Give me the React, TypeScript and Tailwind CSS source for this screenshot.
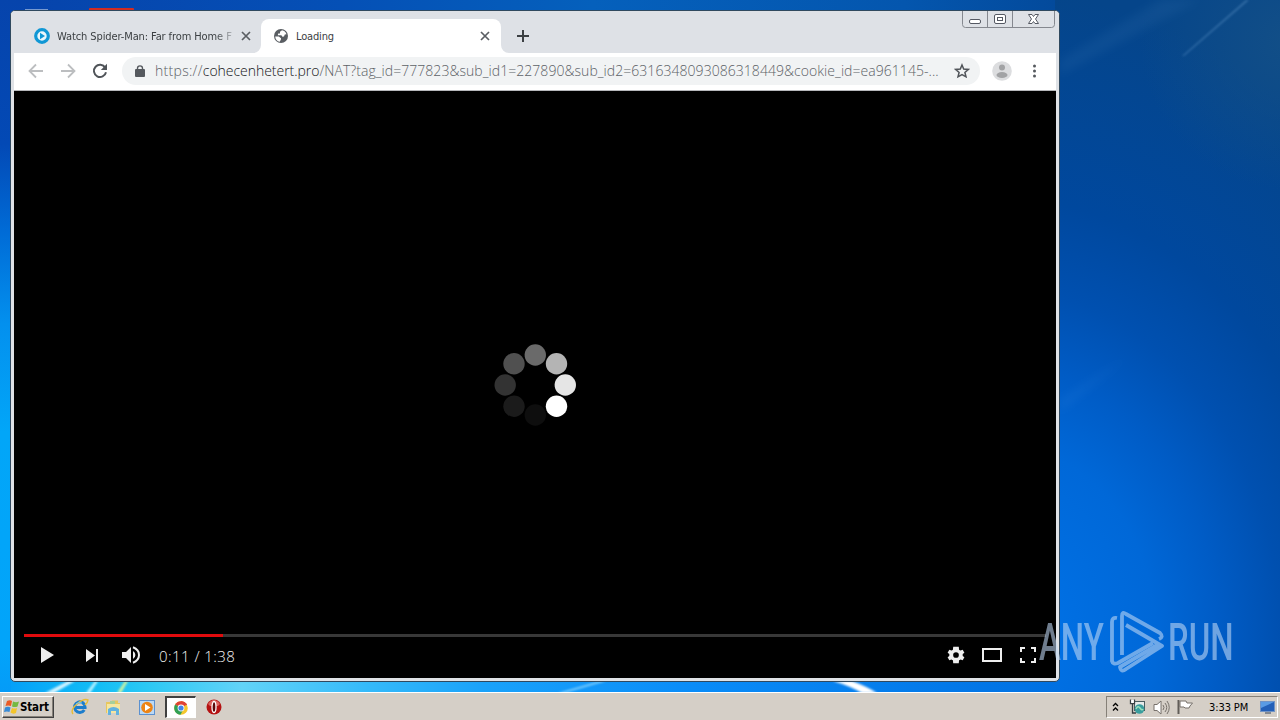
import React from "react";

const ui = "font-['DejaVu_Sans_Condensed','DejaVu_Sans',sans-serif] [font-stretch:condensed]";

function Wallpaper() {
  return (
    <svg className="absolute inset-0" width="1280" height="720" viewBox="0 0 1280 720">
      <defs>
        <linearGradient id="left" x1="0" y1="0" x2="0" y2="1">
          <stop offset="0" stopColor="#0644ac" />
          <stop offset="0.2" stopColor="#0349b5" />
          <stop offset="0.32" stopColor="#006bd6" />
          <stop offset="0.45" stopColor="#0390ee" />
          <stop offset="0.6" stopColor="#02a6f8" />
          <stop offset="0.9" stopColor="#02a4fa" />
          <stop offset="1" stopColor="#0696f6" />
        </linearGradient>
        <linearGradient id="top" x1="0" y1="0" x2="1" y2="0">
          <stop offset="0" stopColor="#0644ac" />
          <stop offset="0.25" stopColor="#0550b6" />
          <stop offset="0.45" stopColor="#0560bc" />
          <stop offset="0.7" stopColor="#0456ae" />
          <stop offset="0.83" stopColor="#03499a" />
          <stop offset="1" stopColor="#0c4784" />
        </linearGradient>
        <radialGradient id="right" gradientUnits="userSpaceOnUse" cx="0" cy="0" r="520" gradientTransform="translate(1000 640) scale(1 1.25)">
          <stop offset="0.1" stopColor="#0070e4" />
          <stop offset="0.3" stopColor="#0068d8" />
          <stop offset="0.42" stopColor="#005cc6" />
          <stop offset="0.54" stopColor="#0050b0" />
          <stop offset="0.68" stopColor="#00489e" />
          <stop offset="1" stopColor="#05458a" />
        </radialGradient>
        <linearGradient id="bottom" x1="0" y1="0" x2="1" y2="0">
          <stop offset="0" stopColor="#05a0f8" />
          <stop offset="0.08" stopColor="#12bdf5" />
          <stop offset="0.13" stopColor="#2cc8f4" />
          <stop offset="0.22" stopColor="#62d3f8" />
          <stop offset="0.34" stopColor="#35bafa" />
          <stop offset="0.45" stopColor="#1aa2fa" />
          <stop offset="0.65" stopColor="#0a8cf8" />
          <stop offset="1" stopColor="#0070e2" />
        </linearGradient>
        <radialGradient id="corner" gradientUnits="userSpaceOnUse" cx="1290" cy="40" r="150">
          <stop offset="0" stopColor="#1b5585" stopOpacity="0.6" />
          <stop offset="1" stopColor="#1b5585" stopOpacity="0" />
        </radialGradient>
        <filter id="soft"><feGaussianBlur stdDeviation="0.8" /></filter>
        <filter id="haze"><feGaussianBlur stdDeviation="5" /></filter>
      </defs>
      <rect width="1280" height="720" fill="url(#left)" />
      <rect x="30" width="1250" height="20" fill="url(#top)" />
      <rect x="1055" y="0" width="225" height="720" fill="url(#right)" />
      <rect x="1055" width="225" height="220" fill="url(#corner)" />
      <rect x="11" y="676" width="1049" height="20" fill="url(#bottom)" />
      <path d="M1060 60L1160 0H1200L1060 75Z" fill="#4b86bd" opacity=".12" filter="url(#haze)" />
      <path d="M1182 56L1246 0H1249L1184 56Z" fill="#6b9fd0" opacity=".4" filter="url(#soft)" />
      <path d="M1060 400L1130 355L1060 412Z" fill="#5da6f0" opacity=".1" filter="url(#haze)" />
      <g filter="url(#soft)">
        <path d="M45 693L68 681H75L54 693Z" fill="#d8f5ff" />
        <path d="M86 693L95 681H98L90 693Z" fill="#c0f3ff" />
        <path d="M117 693L125 681H128L121 693Z" fill="#d2f3a0" />
        <path d="M558 693L600 681H606L564 693Z" fill="#a8e4ff" opacity=".8" />
        <path d="M833 681H852Q868 687 877 693H862Q850 686 833 681Z" fill="#fff" />
      </g>
      <rect x="89" y="8" width="45" height="4" rx="1" fill="#d22c22" />
      <rect x="25" y="9" width="23" height="2" fill="#c5d3e8" opacity=".6" />
    </svg>
  );
}

function Close() {
  return (
    <svg width="10" height="10" viewBox="0 0 10 10" className="shrink-0">
      <path d="M1 1L9 9M9 1L1 9" stroke="#5a5e63" strokeWidth="1.7" fill="none" />
    </svg>
  );
}

function TabStrip() {
  return (
    <div className="flex h-[42px] w-full items-end bg-[#dee1e6]">
      <div className="flex h-[34px] w-[250px] items-center pl-[23px]">
        <svg width="16" height="16" viewBox="0 0 16 16" className="shrink-0">
          <circle cx="8" cy="8" r="6.3" fill="#eaf6fc" stroke="#1097d5" strokeWidth="3.2" />
          <path d="M6 4.8L11 8L6 11.2Z" fill="#1097d5" />
        </svg>
        <div className={`mt-[2px] ml-[7px] w-[176px] shrink-0 overflow-hidden text-[11px] leading-4 tracking-[-0.1px] whitespace-nowrap text-[#3c4043] [mask-image:linear-gradient(to_right,black_90%,transparent_103%)] ${ui}`}>Watch Spider-Man: Far from Home F</div>
        <div className="ml-[8px] flex"><Close /></div>
      </div>
      <div className="relative flex h-[34px] w-[240px] items-center rounded-t-lg bg-white pl-[12px]">
        <svg className="absolute bottom-0 -left-[8px]" width="8" height="8"><path d="M8 0V8H0A8 8 0 0 0 8 0Z" fill="#fff" /></svg>
        <svg className="absolute -right-[8px] bottom-0" width="8" height="8"><path d="M0 0V8H8A8 8 0 0 1 0 0Z" fill="#fff" /></svg>
        <svg width="16" height="16" viewBox="0 0 16 16" className="shrink-0">
          <circle cx="8" cy="8" r="7" fill="#595d62" />
          <path d="M9 2.2L7 3.7V5.4H5.2L4.8 7.2H8.4L9.4 8.8L11 8.6L11.8 6.5L13.5 6.2A6 6 0 0 0 9 2.2ZM2.2 8.4L5.8 8.6L8 10.2V11.3L6.8 13.8A6 6 0 0 1 2.2 8.4Z" fill="#fff" />
        </svg>
        <div className={`mt-[2px] ml-[7px] w-[184px] shrink-0 text-[11px] leading-4 tracking-[-0.16px] text-[#3c4043] ${ui}`}>Loading</div>
        <Close />
      </div>
      <svg className="mb-[11px] ml-[16px]" width="12" height="12"><path d="M6 0V12M0 6H12" stroke="#3c4043" strokeWidth="2" /></svg>
      <svg className="ml-auto self-start" width="97" height="18" viewBox="0 0 97 18">
        <path d="M.5 0V13.5Q.5 16.5 3.5 16.5H89.500Q92.500 16.500 92.500 13.500V0M25.500 0V16.500M50.500 0V16.500" fill="none" stroke="#85888f" />
        <rect x="7.500" y="8.500" width="11" height="4" rx="1.500" fill="#fff" stroke="#555963" />
        <rect x="32.500" y="3.500" width="11" height="9" rx="1.500" fill="#fff" stroke="#555963" />
        <rect x="35.500" y="6.500" width="5" height="3" fill="#fff" stroke="#555963" />
        <path d="M66.500 3.500H70L71.500 5.500L73 3.500H76.500L73.500 8L76.500 12.500H73L71.500 10.500L70 12.500H66.500L69.500 8Z" fill="#fff" stroke="#555963" />
      </svg>
    </div>
  );
}

function Toolbar() {
  return (
    <div className="flex h-[38px] items-center border-b border-[#b6b8bb] bg-white pb-px pl-[14px]">
      <svg width="16" height="16" viewBox="0 0 16 16"><path d="M15 8H2M8 1.500L1.500 8L8 14.500" fill="none" stroke="#bcbec0" strokeWidth="1.800" /></svg>
      <svg className="ml-[16px]" width="16" height="16" viewBox="0 0 16 16"><path d="M1 8H14M8 1.500L14.500 8L8 14.500" fill="none" stroke="#bcbec0" strokeWidth="1.800" /></svg>
      <svg className="ml-[16px]" width="16" height="16" viewBox="0 0 16 16"><path d="M13.200 4.600A6.100 6.100 0 1 0 14 9.200" fill="none" stroke="#505459" strokeWidth="2" /><path d="M15 .8V7H8.800Z" fill="#505459" /></svg>
      <div className="ml-[14px] flex h-[28px] w-[858px] items-center rounded-full bg-[#f1f3f4] pl-[13px]">
        <svg width="10" height="12" viewBox="0 0 10 12" className="mb-px shrink-0"><rect y="4" width="10" height="8" rx="1" fill="#55595e" /><path d="M2.500 4.500V3.200A2.500 2.300 0 0 1 7.500 3.200V4.500" fill="none" stroke="#55595e" strokeWidth="1.400" /></svg>
        <div className="ml-[10px] w-[787px] shrink-0 font-['Open_Sans','Noto_Sans',sans-serif] text-[14px] leading-5 font-light tracking-[0.05px] whitespace-nowrap text-[#5d6267]"><span className="tracking-[0.3px]">https://</span><span className="tracking-[-0.03px] text-[#141518]">cohecenhetert.pro</span>/NAT?tag_id=777823&amp;sub_id1=227890&amp;sub_id2=6316348093086318449&amp;cookie_id=ea961145-...</div>
        <svg width="16" height="16" viewBox="0 0 16 16" className="ml-[12px] shrink-0"><path d="M8 2L9.700 6L14.300 6.400L10.900 9.400L12 13.800L8 11.500L4 13.800L5.100 9.400L1.700 6.400L6.300 6Z" fill="none" stroke="#505459" strokeWidth="1.500" /></svg>
      </div>
      <svg className="ml-[12px]" width="20" height="20" viewBox="0 0 20 20"><circle cx="10" cy="10" r="9.800" fill="#dcdddf" /><circle cx="10" cy="6.500" r="3" fill="#a2a3a5" /><ellipse cx="10" cy="14" rx="5.500" ry="3" fill="#a2a3a5" /></svg>
      <svg className="ml-[20px]" width="5" height="14" viewBox="0 0 5 14"><circle cx="2.500" cy="2" r="1.500" fill="#55595e" /><circle cx="2.500" cy="7" r="1.500" fill="#55595e" /><circle cx="2.500" cy="12" r="1.500" fill="#55595e" /></svg>
    </div>
  );
}

function Player() {
  return (
    <div className="flex h-[587px] flex-col bg-black">
      <div className="flex h-[543px] items-center justify-center pt-[44px]">
        <svg width="84" height="84" viewBox="0 0 84 84">
          <circle cx="42.300" cy="12" r="10.700" fill="#6a6a6a" />
          <circle cx="63.500" cy="20.800" r="10.700" fill="#b4b4b4" />
          <circle cx="72.300" cy="42" r="10.700" fill="#e5e5e5" />
          <circle cx="63.500" cy="63.200" r="10.700" fill="#fff" />
          <circle cx="42.300" cy="72" r="10.700" fill="#0e0e0e" />
          <circle cx="21" cy="63.200" r="10.700" fill="#1b1b1b" />
          <circle cx="12.200" cy="42" r="10.700" fill="#333" />
          <circle cx="21" cy="20.800" r="10.700" fill="#505050" />
        </svg>
      </div>
      <div className="mx-[10px] h-[3px] bg-[#383838]"><div className="h-full w-[199px] bg-[#e00b0d]" /></div>
      <div className="flex h-[36px] items-center pl-[27px]">
        <svg width="14" height="18" viewBox="0 0 14 18"><path d="M0 1L13 9L0 17Z" fill="#eee" /></svg>
        <svg className="ml-[31px]" width="13" height="13" viewBox="0 0 13 13"><path d="M0 0L9 6.500L0 13ZM10 0H12V13H10Z" fill="#eee" /></svg>
        <svg className="ml-[22px]" width="20" height="20" viewBox="0 0 20 20"><path d="M1 7H5L10 2V18L5 13H1ZM12 6Q14.400 7.500 14.400 10T12 14Z" fill="#eee" /><path d="M12 2.300Q18 4.500 18 10T12 17.700" fill="none" stroke="#eee" strokeWidth="2" /></svg>
        <div className="mt-[2px] ml-[18px] w-[100px] font-['Open_Sans',sans-serif] text-[15px] leading-5 font-light tracking-[0.45px] whitespace-nowrap text-[#f5f5f5]">0:11 / 1:38</div>
        <svg className="ml-[688px]" width="18" height="18" viewBox="0 0 24 24"><path fill="#eee" d="M20.900 13.200c.1-.8.1-1.600 0-2.400l2.300-1.800-2.300-4-2.800 1.100c-.6-.5-1.300-.9-2-1.200L15.700 1H8.300l-.4 3.900c-.7.300-1.400.7-2 1.200L3.100 5 .8 9l2.300 1.800c-.1.800-.1 1.600 0 2.400L.8 15l2.300 4 2.800-1.100c.6.500 1.300.9 2 1.200l.4 3.900h7.400l.4-3.900c.7-.3 1.400-.7 2-1.200l2.800 1.100 2.300-4zM12 15.800a3.800 3.800 0 1 1 0-7.600 3.800 3.800 0 0 1 0 7.600z" /></svg>
        <svg className="ml-[17px]" width="20" height="14"><rect x="1" y="1" width="18" height="12" fill="none" stroke="#eee" strokeWidth="2" /></svg>
        <svg className="ml-[18px]" width="16" height="16"><path d="M1 5V1H5M11 1H15V5M15 11V15H11M5 15H1V11" fill="none" stroke="#eee" strokeWidth="2" /></svg>
      </div>
    </div>
  );
}

function Watermark() {
  return (
    <svg className="absolute top-[594px] left-[1024px] overflow-visible" width="224" height="92" viewBox="-10 -10 224 92" fill="#c0d8f5" opacity=".58">
      <text transform="translate(5 55.500) scale(.645 1)" fontFamily="Roboto, sans-serif" fontSize="51" fontWeight="500">ANY</text>
      <text transform="translate(134 55.500) scale(.645 1)" fontFamily="Roboto, sans-serif" fontSize="51" fontWeight="500">RUN</text>
      <g fill="none" stroke="#c0d8f5" strokeWidth="3.800" strokeLinejoin="round">
        <path d="M83 14Q78 13 78 18V57Q79 61 84 59L119 39" />
        <path d="M88 51V12Q88 7 92 10L126 29Q130 33 125 35" />
        <path d="M92 21L128 42L92 65Q87 69 86 63L125 40" />
      </g>
    </svg>
  );
}

function Taskbar() {
  return (
    <div className={`relative flex h-[28px] w-full items-center border-t border-white bg-[#d5cfc7] pt-[1px] pl-[2px] text-black ${ui}`}>
      <div className="flex h-[22px] w-[52px] items-center border border-t-white border-r-[#404040] border-b-[#404040] border-l-white pl-[1px] shadow-[inset_-1px_-1px_0_#868179]">
        <svg width="16" height="16" viewBox="0 0 16 16" className="shrink-0"><path d="M3 2Q6 .5 8 2L7 7Q4 6 1.500 7Z" fill="#ec5b24" /><path d="M9 2.500Q12 4 15 2.500L13.500 7.500Q11 8.500 8 7.500Z" fill="#75b943" /><path d="M1 8.500Q4 7 6.500 8.500L5.500 13Q3 12 0 13Z" fill="#388bd6" /><path d="M8 9Q10.500 10 13 9L12 14Q9 15.500 6.500 13.500Z" fill="#f4c52b" /></svg>
        <span className="text-[11.500px] leading-4 font-bold tracking-[-0.15px]">Start</span>
      </div>
      <svg className="ml-[17px]" width="18" height="18" viewBox="0 0 18 18"><path d="M13.300 12A5.300 5.300 0 1 1 14.100 9.500H4.800" fill="none" stroke="#1c7dcc" strokeWidth="3" /><path d="M2 16Q-1 12 6 6T17 2Q17 4 14 7" fill="none" stroke="#e8bc35" strokeWidth="1.400" /><path d="M5 6Q8 3.500 11 5" stroke="#70c5f3" fill="none" /></svg>
      <svg className="ml-[16px]" width="17" height="17" viewBox="0 0 17 17"><path d="M1 3H6L7 1.500H13V4H15V14H1Z" fill="#e7c75f" /><path d="M2 5H15V14H2Z" fill="#f6e6a0" /><path d="M5 2H10V5H5Z" fill="#a7cf9a" /><path d="M3 16V10Q8.500 6 14 10V16H11V12H6V16Z" fill="#62b2df" /></svg>
      <svg className="ml-[17px]" width="17" height="17" viewBox="0 0 17 17"><rect x=".5" y="1.500" width="15" height="14" fill="#bbd9f5" stroke="#5b91d0" /><circle cx="8" cy="8.500" r="5.800" fill="#ed8415" /><path d="M6 5L11.500 8.500L6 12Z" fill="#fff" /></svg>
      <div className="ml-[9px] flex h-[22px] w-[31px] items-center justify-center border-t-2 border-r border-b border-l-2 border-t-[#404040] border-r-white border-b-white border-l-[#404040] bg-white">
        <svg width="14" height="14" viewBox="0 0 14 14"><circle cx="7" cy="7" r="6.800" fill="#f4c72d" /><path d="M7 7L1.100 3.600A6.800 6.800 0 0 1 12.900 3.600Z" fill="#df4336" /><path d="M7 7L1.100 3.600A6.800 6.800 0 0 0 6.500 13.800L9 9Z" fill="#31a055" /><path d="M7 4H13Q12 1 7 .2Z" fill="#df4336" /><circle cx="7" cy="7" r="3.400" fill="#fff" /><circle cx="7" cy="7" r="2.600" fill="#4285e8" /></svg>
      </div>
      <svg className="ml-[10px]" width="16" height="16" viewBox="0 0 16 16"><circle cx="8" cy="8" r="7.500" fill="#b51212" /><path d="M2 5Q8-3 14 5L12 7H4Z" fill="#dc655f" /><ellipse cx="8" cy="8" rx="2" ry="5.500" fill="#5c0909" stroke="#fff" strokeWidth="1.300" /></svg>
      <div className="mr-[2px] ml-auto flex h-[22px] w-[172px] items-center border border-t-[#858078] border-r-white border-b-white border-l-[#858078] pl-[5px]">
        <svg width="7" height="10" viewBox="0 0 7 10"><path d="M1 4L3.500 1.500L6 4M1 8.500L3.500 6L6 8.500" fill="none" stroke="#000" strokeWidth="1.300" /></svg>
        <svg className="ml-[10px]" width="17" height="16" viewBox="0 0 17 16"><rect x="5.500" y="2.500" width="10" height="9" fill="#e6ebea" stroke="#4a5d60" /><circle cx="10.500" cy="10" r="4.800" fill="#3a9e9e" /><path d="M7 10Q9 6 11 9T14 10" stroke="#9be0bb" strokeWidth="1.500" fill="none" /><path d="M1.500 .5V4.500H5.500V.5M3.500 5V14H7" fill="none" stroke="#384044" strokeWidth="1.300" /><path d="M2.200 1H4.800V4H2.200Z" fill="#fff" /></svg>
        <svg className="ml-[7px]" width="17" height="15" viewBox="0 0 17 15"><path d="M1 4.500H4L8 1V14L4 10.500H1Z" fill="#fff" stroke="#77716b" /><path d="M10 5Q12 7.500 10 10M12 3Q15.500 7.500 12 12M14 1Q18.500 7.500 14 14" fill="none" stroke="#77716b" /></svg>
        <svg className="ml-[7px]" width="17" height="16" viewBox="0 0 17 16"><path d="M1.500 1V15" stroke="#615d58" strokeWidth="2" /><path d="M3 2H9L10 4H15.500L13 7L12 9H8L7 8H3Z" fill="#fff" stroke="#77716b" /></svg>
        <span className="mt-px ml-[15px] w-[51px] shrink-0 text-[11px] leading-4 tracking-[-0.1px] whitespace-nowrap">3:33 PM</span>
        <svg className="shrink-0" width="16" height="14" viewBox="0 0 16 14"><rect x=".5" y="1.500" width="14" height="10" fill="#2460b8" stroke="#7294c5" /><path d="M1 2H14L1 8Z" fill="#5a9be4" /><path d="M5 13H11" stroke="#34455a" /></svg>
      </div>
    </div>
  );
}

export default function App() {
  return (
    <div className="relative flex h-[720px] w-[1280px] flex-col justify-end overflow-hidden bg-[#0644ac]">
      <Wallpaper />
      <Taskbar />
      <div className="absolute top-[10px] left-[10px] flex h-[672px] w-[1050px] flex-col overflow-hidden rounded-[5px] border border-[#30495f] bg-[#dfe2e6]">
        <TabStrip />
        <div className="mx-[3px]">
          <Toolbar />
          <Player />
        </div>
      </div>
      <Watermark />
    </div>
  );
}
